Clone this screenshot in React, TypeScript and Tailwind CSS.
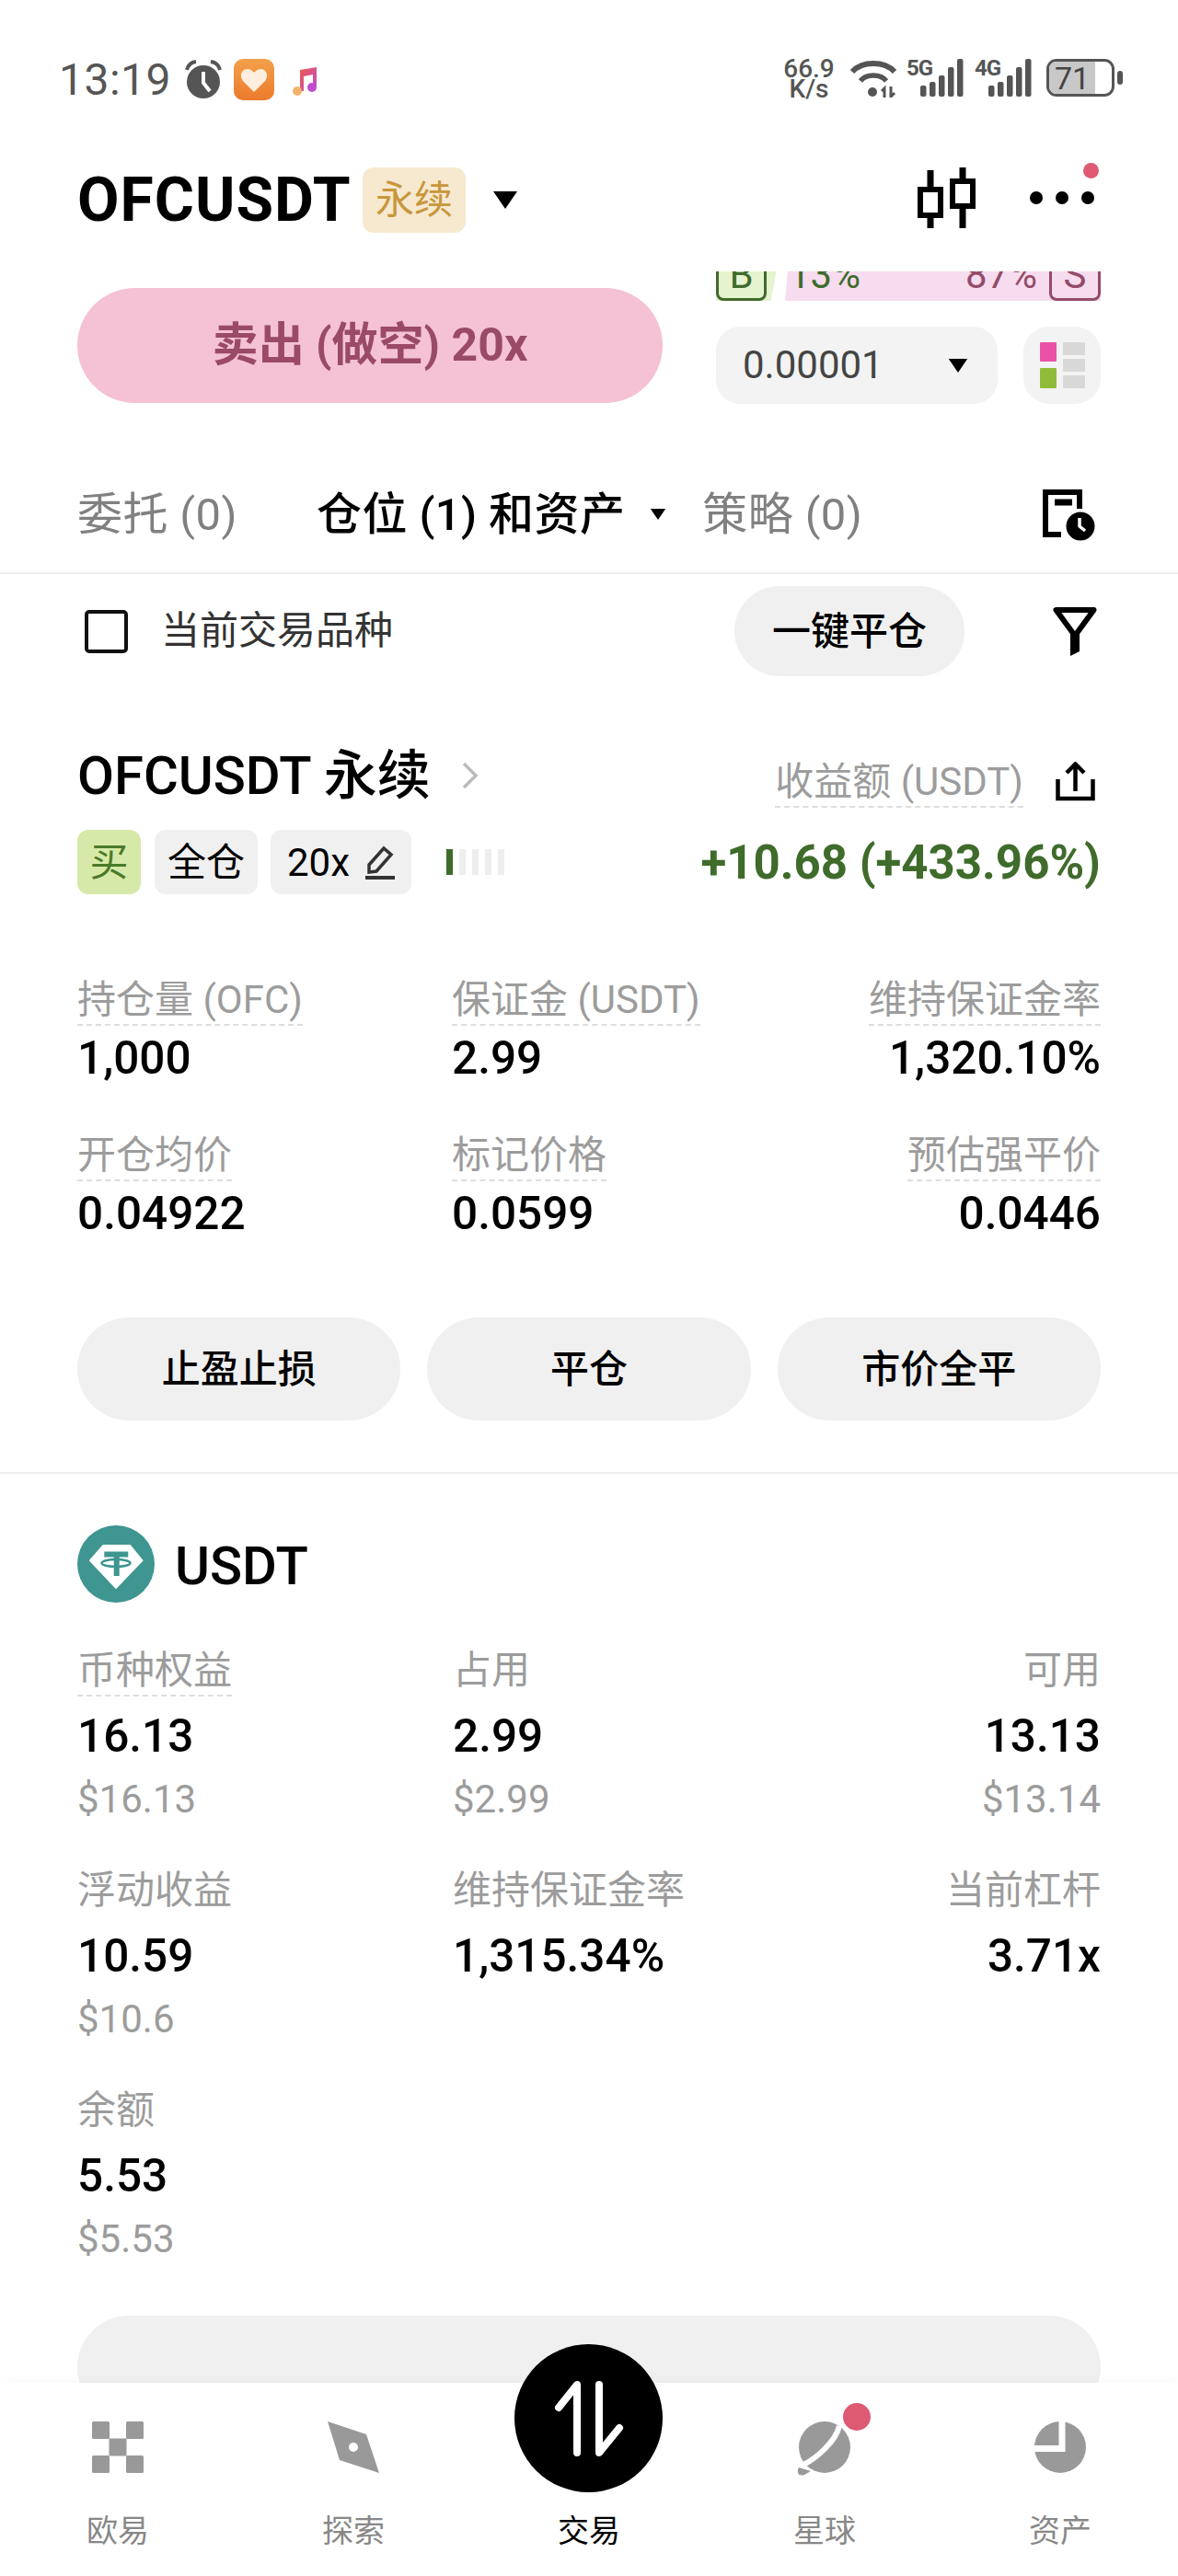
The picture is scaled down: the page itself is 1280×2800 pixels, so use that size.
import React from "react";

function Label({ children, dashed = true }: { children: React.ReactNode; dashed?: boolean }) {
  return (
    <span className={`inline-block h-[54px] border-b-2 border-dashed text-[42px] leading-[52px] text-[#9c9c9c] ${dashed ? "border-[#dddddd]" : "border-transparent"}`}>
      {children}
    </span>
  );
}

function Stat({ label, value, sub, align = "left", dashed = true, asset = false }: { label: string; value: string; sub?: string; align?: "left" | "right"; dashed?: boolean; asset?: boolean }) {
  return (
    <div className={align === "right" ? "text-right" : "text-left"}>
      <Label dashed={dashed}>{label}</Label>
      <div className={`${asset ? "mt-[15px]" : "mt-[7px]"} text-[49.5px] font-medium leading-[56px] text-black`}>{value}</div>
      {sub && <div className="mt-[13px] text-[42px] leading-[56px] text-[#9c9c9c]">{sub}</div>}
    </div>
  );
}

function Triangle({ className }: { className: string }) {
  return (
    <svg viewBox="0 0 28 19" className={className}>
      <path d="M1 0 H27 L14 19 Z" fill="#000" />
    </svg>
  );
}

function Signal({ label }: { label: string }) {
  return (
    <div className="relative h-[41px] w-[62px]">
      <span className="absolute left-0 top-[-3px] text-[24px] font-bold leading-[26px] tracking-[-1px] text-[#555]">{label}</span>
      <svg viewBox="0 0 47 41" className="absolute right-0 top-0 h-[41px] w-[47px]" fill="#555">
        <rect x="0" y="29" width="6.5" height="12" rx="2" />
        <rect x="10" y="25" width="6.5" height="16" rx="2" />
        <rect x="20" y="18" width="6.5" height="23" rx="2" />
        <rect x="30" y="9" width="6.5" height="32" rx="2" />
        <rect x="40" y="0" width="6.5" height="41" rx="2" />
      </svg>
    </div>
  );
}

function StatusBar() {
  return (
    <div className="flex h-[168px] items-start justify-between pl-[64px] pr-[60px] pt-[64px] text-[#555]">
      <div className="flex items-center">
        <span className="w-[126px] text-[48px] font-normal leading-[44px] tracking-[0.5px]">13:19</span>
        <svg viewBox="0 0 42 44" className="ml-[10px] h-[44px] w-[42px]">
          <circle cx="21" cy="24" r="18" fill="#555" />
          <path d="M3 11 Q5 3 13 2 M39 11 Q37 3 29 2" stroke="#555" strokeWidth="4" fill="none" />
          <path d="M21 13 V25 L28 34" stroke="#fff" strokeWidth="4" fill="none" />
        </svg>
        <div className="ml-[12px] flex h-[45px] w-[44px] items-center justify-center rounded-[10px] bg-gradient-to-b from-[#f3a04a] to-[#ec7a2c]">
          <svg viewBox="0 0 32 28" className="h-[26px] w-[30px]">
            <path d="M16 28 L3 15 C-3 7 4 -2 12 2 L16 5 L20 2 C28 -2 35 7 29 15 Z" fill="#fdeedd" />
          </svg>
        </div>
        <svg viewBox="0 0 28 32" className="ml-[19px] mt-[2px] h-[32px] w-[28px]">
          <defs>
            <linearGradient id="note" x1="0" y1="0" x2="1" y2="1">
              <stop offset="0" stopColor="#ec5a4c" />
              <stop offset="1" stopColor="#c04ccc" />
            </linearGradient>
          </defs>
          <path d="M9 4 L27 1 V22 H23 V9 L13 11 V27 H9 Z" fill="url(#note)" />
          <circle cx="22" cy="23" r="5" fill="#c04ccc" />
          <circle cx="6" cy="27" r="5" fill="#f2b46a" />
        </svg>
      </div>
      <div className="flex items-start">
        <div className="w-[58px] text-center text-[28px] font-medium leading-[22px] text-[#555]">
          <div>66.9</div>
          <div>K/s</div>
        </div>
        <svg viewBox="0 0 52 42" className="ml-[15px] h-[42px] w-[52px]" fill="none" stroke="#555">
          <path d="M3 14 C14 2 38 2 49 14" strokeWidth="6" />
          <path d="M12 24 C18 16 34 16 40 24" strokeWidth="5.5" />
          <circle cx="25" cy="36" r="5" fill="#555" stroke="none" />
          <path d="M38 42 V32 L35 35 M45 30 V41 L49 37" strokeWidth="3" />
        </svg>
        <div className="ml-[10px]">
          <Signal label="5G" />
        </div>
        <div className="ml-[12px]">
          <Signal label="4G" />
        </div>
        <div className="ml-[16px] flex items-center">
          <div className="relative h-[41px] w-[74px] overflow-hidden rounded-[11px] border-[3.5px] border-[#555]">
            <div className="flex h-full w-[50px] items-center justify-center bg-[#c8c8c8] text-[34px] font-normal leading-none text-[#444]">71</div>
          </div>
          <div className="ml-[3px] h-[15px] w-[6px] rounded-[3px] bg-[#555]" />
        </div>
      </div>
    </div>
  );
}

function Header() {
  return (
    <div className="flex h-[127px] items-start justify-between pl-[84px] pr-[84px] pt-[14px]">
      <div className="flex items-center">
        <span className="w-[296px] text-[66px] font-bold leading-[71px] tracking-[1px] text-black">OFCUSDT</span>
        <span className="ml-[14px] flex h-[71px] w-[112px] items-center justify-center rounded-[12px] bg-[#f6e9cf] text-[42px] text-[#c8963c]">永续</span>
        <Triangle className="ml-[29px] h-[19px] w-[28px]" />
      </div>
      <div className="relative flex items-center">
        <svg viewBox="0 0 64 66" className="h-[66px] w-[64px]" fill="none" stroke="#000" strokeWidth="6">
          <rect x="4" y="24" width="22" height="28" />
          <path d="M15 3 V21 M15 55 V66" strokeWidth="7" />
          <rect x="39" y="15" width="22" height="27" />
          <path d="M50 0 V12 M50 45 V66" strokeWidth="7" />
        </svg>
        <div className="ml-[59px] mr-[7px] flex gap-[14px]">
          <span className="h-[14px] w-[14px] rounded-full bg-black" />
          <span className="h-[14px] w-[14px] rounded-full bg-black" />
          <span className="h-[14px] w-[14px] rounded-full bg-black" />
        </div>
        <span className="absolute right-[2px] top-[-5px] h-[17px] w-[17px] rounded-full bg-[#dd5a72]" />
      </div>
    </div>
  );
}

function OrderPanel() {
  return (
    <div className="flex h-[185px] pl-[84px]">
      <div className="mt-[18px] flex h-[125px] w-[636px] items-center justify-center rounded-full bg-[#f4c2d4] text-[50px] font-bold text-[#9a4a68]">
        卖出 (做空) 20x
      </div>
      <div className="ml-[58px] w-[418px]">
        <div className="flex h-[32px] items-end overflow-hidden">
          <div className="h-[56px] w-[70px] bg-[#e5f3ce] [clip-path:polygon(0_0,100%_0,85%_100%,0_100%)]">
            <div className="flex h-[56px] w-[55px] items-center justify-center rounded-[8px] border-[3px] border-[#3f6b2b] text-[42px] leading-none text-[#3f6b2b]">B</div>
          </div>
          <div className="ml-[5px] flex h-[56px] w-[343px] items-center justify-between bg-[#f6dcee] [clip-path:polygon(5px_0,100%_0,100%_100%,0_100%)]">
            <span className="ml-[4px] text-[42px] leading-none text-[#3f6b2b]">13%</span>
            <div className="flex items-center">
              <span className="mr-[13px] text-[42px] leading-none text-[#944a68]">87%</span>
              <div className="flex h-[56px] w-[56px] items-center justify-center rounded-[8px] border-[3px] border-[#944a68] text-[42px] leading-none text-[#944a68]">S</div>
            </div>
          </div>
        </div>
        <div className="mt-[28px] flex items-center">
          <div className="flex h-[84px] w-[306px] items-center justify-between rounded-[26px] bg-[#f3f3f3] pl-[29px] pr-[32px]">
            <span className="text-[42px] leading-none text-[#444]">0.00001</span>
            <Triangle className="h-[15px] w-[22px]" />
          </div>
          <div className="ml-[28px] flex h-[84px] w-[84px] items-center justify-center gap-[7px] rounded-[28px] bg-[#f3f3f3]">
            <div className="flex flex-col gap-[7px]">
              <span className="h-[21px] w-[18px] rounded-[1px] bg-[#ea52a8]" />
              <span className="h-[22px] w-[18px] rounded-[1px] bg-[#8fbc38]" />
            </div>
            <div className="flex flex-col gap-[4px]">
              <span className="h-[14px] w-[24px] rounded-[1px] bg-[#d8d8d8]" />
              <span className="h-[14px] w-[24px] rounded-[1px] bg-[#d8d8d8]" />
              <span className="h-[14px] w-[24px] rounded-[1px] bg-[#d8d8d8]" />
            </div>
          </div>
        </div>
      </div>
    </div>
  );
}

function Tabs() {
  return (
    <div className="flex h-[144px] items-center border-b-2 border-[#eeeeee] pl-[84px] pr-[90px] pt-[16px] text-[49px] leading-none tracking-[0.4px]">
      <span className="w-[260px] text-[#808080]">委托 (0)</span>
      <span className="font-medium text-black">仓位 (1) 和资产</span>
      <Triangle className="ml-[26px] h-[12px] w-[20px]" />
      <span className="ml-[38px] text-[#808080]">策略 (0)</span>
      <svg viewBox="0 0 57 57" className="ml-auto h-[57px] w-[57px]" fill="none" stroke="#000">
        <path d="M20 50 H3 V4 H40 V22" strokeWidth="6" />
        <path d="M13 15 H32" strokeWidth="7" />
        <circle cx="41" cy="41" r="15.5" fill="#000" stroke="none" />
        <path d="M40 32 V41 L46 46" stroke="#fff" strokeWidth="3.5" />
      </svg>
    </div>
  );
}

function FilterRow() {
  return (
    <div className="mt-[13px] flex h-[98px] items-center pl-[92px] pr-[88px]">
      <span className="h-[47px] w-[47px] rounded-[5px] border-[4px] border-[#111]" />
      <span className="ml-[36px] text-[42px] leading-none text-[#333]">当前交易品种</span>
      <span className="ml-auto flex h-[98px] w-[250px] items-center justify-center rounded-full bg-[#f0f0f0] text-[42px] font-medium text-black">一键平仓</span>
      <svg viewBox="0 0 48 53" className="ml-[96px] h-[53px] w-[48px]">
        <path d="M3.5 3 H44.5 L24 31 Z" fill="none" stroke="#000" strokeWidth="6" strokeLinejoin="round" />
        <path d="M19 29 H29 V48 L19 53 Z" fill="#000" />
      </svg>
    </div>
  );
}

function PositionCard() {
  return (
    <div className="px-[84px]">
      <div className="mt-[78px] flex h-[60px] items-start justify-between">
        <div className="flex h-[60px] items-center">
          <span className="text-[58px] font-medium leading-none text-black">OFCUSDT 永续</span>
          <svg viewBox="0 0 20 30" className="ml-[33px] h-[30px] w-[20px]" fill="none" stroke="#bbbbbb" strokeWidth="3.5">
            <path d="M3 2 L16 15 L3 28" />
          </svg>
        </div>
        <div className="flex items-start">
          <div className="mt-[11px]">
            <Label>收益额 (USDT)</Label>
          </div>
          <svg viewBox="0 0 43 43" className="ml-[35px] mr-[6px] mt-[15px] h-[43px] w-[43px]" fill="none" stroke="#000" strokeWidth="4.5">
            <path d="M21.5 32 V3 M12 12 L21.5 2.5 L31 12" />
            <path d="M2.5 19 V40 H40.5 V19" />
          </svg>
        </div>
      </div>
      <div className="mt-[29px] flex h-[70px] items-center">
        <span className="flex h-[70px] w-[69px] items-center justify-center rounded-[12px] bg-[#d7e9a8] text-[42px] text-[#4a7a2a]">买</span>
        <span className="ml-[15px] flex h-[70px] w-[112px] items-center justify-center rounded-[12px] bg-[#f0f0f0] text-[42px] text-black">全仓</span>
        <span className="ml-[14px] flex h-[70px] w-[153px] items-center justify-center rounded-[12px] bg-[#f0f0f0] text-[42px] text-black">
          20x
          <svg viewBox="0 0 33 37" className="ml-[16px] h-[37px] w-[33px]" fill="none" stroke="#333">
            <path d="M5 21 L21 3 L29 10 L13 28 L5 29 Z" strokeWidth="3.5" />
            <path d="M1 35 H33" strokeWidth="4" />
          </svg>
        </span>
        <div className="ml-[38px] flex gap-[7px]">
          <span className="h-[28px] w-[7px] bg-[#3f6b2b]" />
          <span className="h-[28px] w-[7px] bg-[#eeeeee]" />
          <span className="h-[28px] w-[7px] bg-[#eeeeee]" />
          <span className="h-[28px] w-[7px] bg-[#eeeeee]" />
          <span className="h-[28px] w-[7px] bg-[#eeeeee]" />
        </div>
        <span className="ml-auto text-[51px] font-bold leading-none text-[#3f6b2b]">+10.68 (+433.96%)</span>
      </div>
      <div className="mt-[89px] grid grid-cols-[407px_300px_1fr] gap-y-[52px]">
        <Stat label="持仓量 (OFC)" value="1,000" />
        <Stat label="保证金 (USDT)" value="2.99" />
        <Stat label="维持保证金率" value="1,320.10%" align="right" />
        <Stat label="开仓均价" value="0.04922" />
        <Stat label="标记价格" value="0.0599" />
        <Stat label="预估强平价" value="0.0446" align="right" />
      </div>
      <div className="mt-[85px] flex gap-[29px]">
        {["止盈止损", "平仓", "市价全平"].map((t) => (
          <span key={t} className="flex h-[112px] flex-1 items-center justify-center rounded-full bg-[#f0f0f0] text-[42px] font-medium text-black">
            {t}
          </span>
        ))}
      </div>
    </div>
  );
}

function AssetCard() {
  return (
    <div className="mt-[56px] border-t-2 border-[#eeeeee] px-[84px] pt-[56px]">
      <div className="flex items-center">
        <svg viewBox="0 0 84 84" className="h-[84px] w-[84px]">
          <circle cx="42" cy="42" r="42" fill="#3f9590" />
          <path d="M27.7 21 H57.7 L71.7 38.3 L42 69.3 L12.7 38.3 Z" fill="#fff" />
          <path d="M29.3 31.5 H55.3 M42.7 29 V55" stroke="#3f9590" strokeWidth="6" />
          <ellipse cx="42" cy="41" rx="15.5" ry="4" fill="none" stroke="#3f9590" strokeWidth="2.5" />
        </svg>
        <span className="ml-[22px] pt-[4px] text-[58px] font-medium leading-none text-black">USDT</span>
      </div>
      <div className="mt-[48px] grid grid-cols-[408px_302px_1fr] gap-y-[45px]">
        <Stat asset label="币种权益" value="16.13" sub="$16.13" />
        <Stat asset label="占用" value="2.99" sub="$2.99" dashed={false} />
        <Stat asset label="可用" value="13.13" sub="$13.14" align="right" dashed={false} />
        <Stat asset label="浮动收益" value="10.59" sub="$10.6" dashed={false} />
        <Stat asset label="维持保证金率" value="1,315.34%" dashed={false} />
        <Stat asset label="当前杠杆" value="3.71x" align="right" dashed={false} />
        <Stat asset label="余额" value="5.53" sub="$5.53" dashed={false} />
      </div>
      <div className="mt-[55px] h-[112px] rounded-[56px] bg-[#f0f0f0]" />
    </div>
  );
}

function NavItem({ label, active, children }: { label: string; active?: boolean; children?: React.ReactNode }) {
  return (
    <div className="flex w-[256px] flex-col items-center">
      <div className="flex h-[56px] items-center justify-center">{children}</div>
      <span className={`mt-[45px] text-[34px] leading-[36px] ${active ? "text-black" : "text-[#888888]"}`}>{label}</span>
    </div>
  );
}

function BottomNav() {
  return (
    <div className="absolute bottom-0 left-0 h-[210px] w-[1280px] bg-white pt-[42px] shadow-[0_-6px_10px_rgba(0,0,0,0.015)]">
      <div className="flex">
        <NavItem label="欧易">
          <svg viewBox="0 0 56 56" className="h-[56px] w-[56px]" fill="#999">
            <rect x="0" y="0" width="19" height="19" rx="1.5" />
            <rect x="37" y="0" width="19" height="19" rx="1.5" />
            <rect x="18.5" y="18.5" width="19" height="19" />
            <rect x="0" y="37" width="19" height="19" rx="1.5" />
            <rect x="37" y="37" width="19" height="19" rx="1.5" />
          </svg>
        </NavItem>
        <NavItem label="探索">
          <svg viewBox="0 0 56 56" className="h-[56px] w-[56px]">
            <path d="M0 0 L42 14 L56 56 L13 42 Z" fill="#999" />
            <circle cx="28" cy="28" r="5" fill="#fff" />
          </svg>
        </NavItem>
        <NavItem label="交易" active />
        <NavItem label="星球">
          <div className="relative h-[56px] w-[56px]">
            <svg viewBox="0 0 62 60" className="absolute left-[-3px] top-0 h-[60px] w-[62px]">
              <circle cx="31" cy="28" r="28" fill="#999" />
              <path d="M47 5 C43 22 22 40 8 47" fill="none" stroke="#fff" strokeWidth="6" />
              <path d="M3 50 C0 56 3 60 9 58 L16 54 Z" fill="#999" />
            </svg>
            <span className="absolute left-[46px] top-[-22px] h-[34px] w-[34px] rounded-full border-[2px] border-white bg-[#dd5a72]" />
          </div>
        </NavItem>
        <NavItem label="资产">
          <svg viewBox="0 0 56 56" className="h-[56px] w-[56px]">
            <circle cx="28" cy="28" r="28" fill="#999" />
            <path d="M30 0 V29.5 H0" fill="none" stroke="#fff" strokeWidth="7" />
          </svg>
        </NavItem>
      </div>
      <div className="absolute left-[559px] top-[-42px] flex h-[161px] w-[161px] items-center justify-center rounded-full bg-black">
        <svg viewBox="0 0 161 161" className="h-[161px] w-[161px]" fill="none" stroke="#fff" strokeWidth="8" strokeLinecap="round" strokeLinejoin="round">
          <path d="M68 118 V44 L48 69" />
          <path d="M92 44 V118 L114 91" />
        </svg>
      </div>
    </div>
  );
}

export default function App() {
  return (
    <div className="relative h-[2800px] w-[1280px] overflow-hidden bg-white font-['Roboto','Noto_Sans_CJK_SC',sans-serif]">
      <StatusBar />
      <Header />
      <OrderPanel />
      <Tabs />
      <FilterRow />
      <PositionCard />
      <AssetCard />
      <BottomNav />
    </div>
  );
}
